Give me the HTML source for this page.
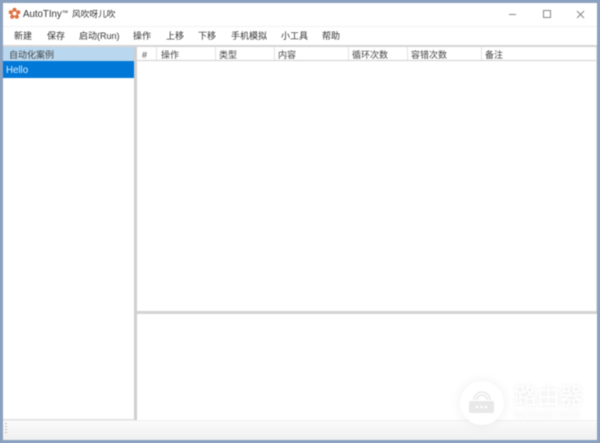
<!DOCTYPE html>
<html>
<head>
<meta charset="utf-8">
<style>
html,body{margin:0;padding:0;background:#8ba1c0;}
body{width:600px;height:443px;overflow:hidden;position:relative;font-family:"Liberation Sans","Noto Sans CJK SC",sans-serif;color:#222;}
#w{position:absolute;left:0;top:0;width:600px;height:443px;background:#8ba1c0;filter:blur(.4px);overflow:hidden;}
.a{position:absolute;white-space:nowrap;}
.t{font-size:9px;line-height:14px;color:#333;top:29px;}
.h{font-size:9px;line-height:14px;color:#444;top:47.500px;}
.v{position:absolute;top:47px;width:1px;height:13px;background:#e2e2e2;}
</style>
</head>
<body>
<div id="w">
<div class="a" style="left:3px;top:3px;width:594px;height:437px;background:#fff;"></div>
<!-- title -->
<svg class="a" style="left:8px;top:7px;" width="13" height="13" viewBox="0 0 13 13"><g fill="#dc7040"><circle cx="6.500" cy="2.700" r="2"/><circle cx="10.300" cy="5.300" r="2"/><circle cx="8.800" cy="9.800" r="2"/><circle cx="4.200" cy="9.800" r="2"/><circle cx="2.700" cy="5.300" r="2"/><circle cx="6.500" cy="6.500" r="3.400"/></g><circle cx="6.500" cy="6.500" r="2" fill="#fff"/></svg>
<div class="a" style="left:23px;top:6px;font-size:9.700px;line-height:15px;color:#333;">AutoTIny<span style="font-size:6.500px;vertical-align:2px;">™</span></div>
<div class="a" style="left:72px;top:6.500px;font-size:8.700px;line-height:15px;color:#333;">风吹呀儿吹</div>
<div class="a" style="left:509px;top:14px;width:7px;height:1px;background:#888;"></div>
<div class="a" style="left:543px;top:10px;width:6px;height:6px;border:1px solid #888;"></div>
<svg class="a" style="left:576px;top:10px;" width="9" height="9" viewBox="0 0 9 9"><path d="M1 1L8 8M8 1L1 8" stroke="#888" stroke-width="1" fill="none"/></svg>
<!-- menu -->
<div class="a" style="left:3px;top:26px;width:594px;height:1px;background:#f3f3f3;"></div>
<div class="a t" style="left:14px;">新建</div>
<div class="a t" style="left:47px;">保存</div>
<div class="a t" style="left:79px;">启动(Run)</div>
<div class="a t" style="left:133px;">操作</div>
<div class="a t" style="left:166px;">上移</div>
<div class="a t" style="left:198px;">下移</div>
<div class="a t" style="left:231px;">手机模拟</div>
<div class="a t" style="left:281px;">小工具</div>
<div class="a t" style="left:322px;">帮助</div>
<!-- left panel -->
<div class="a" style="left:3px;top:45px;width:594px;height:2px;background:#d6d6d6;"></div>
<div class="a" style="left:3px;top:47px;width:131px;height:14px;background:#b9d7ee;"></div>
<div class="a h" style="left:9px;">自动化案例</div>
<div class="a" style="left:3px;top:61px;width:131px;height:17px;background:#0078d7;"></div>
<div class="a" style="left:6px;top:62.500px;font-size:9.700px;line-height:15px;color:#dff0ff;">Hello</div>
<div class="a" style="left:134px;top:47px;width:3px;height:373px;background:#cfcfcf;"></div>
<div class="a" style="left:3px;top:419px;width:131px;height:1px;background:#ddd;"></div>
<!-- right list header -->
<div class="a" style="left:137px;top:60px;width:460px;height:1px;background:#d0d0d0;"></div>
<div class="a h" style="left:142px;">#</div>
<div class="a h" style="left:161px;">操作</div>
<div class="a h" style="left:219px;">类型</div>
<div class="a h" style="left:278px;">内容</div>
<div class="a h" style="left:352px;">循环次数</div>
<div class="a h" style="left:411px;">容错次数</div>
<div class="a h" style="left:485px;">备注</div>
<div class="v" style="left:156px;"></div>
<div class="v" style="left:215px;"></div>
<div class="v" style="left:274px;"></div>
<div class="v" style="left:348px;"></div>
<div class="v" style="left:407px;"></div>
<div class="v" style="left:481px;"></div>
<div class="a" style="left:596px;top:47px;width:1px;height:264px;background:#e4e4e4;"></div>
<!-- splitter -->
<div class="a" style="left:137px;top:311px;width:460px;height:3px;background:#d4d4d4;"></div>
<!-- status -->
<div class="a" style="left:3px;top:420px;width:594px;height:20px;background:linear-gradient(#fbfbfb,#f0f0f0);border-top:1px solid #eee;box-sizing:border-box;"></div>
<div class="a" style="left:5px;top:423px;width:2px;height:12px;background:repeating-linear-gradient(#bbb 0,#bbb 1px,transparent 1px,transparent 3px);"></div>
<!-- watermark -->
<div class="a" style="left:460px;top:381px;width:44px;height:44px;border-radius:50%;background:#fff;box-shadow:0 0 12px rgba(0,0,0,.07);"></div>
<svg class="a" style="left:466px;top:387px;" width="32" height="32" viewBox="0 0 32 32"><rect x="3" y="14" width="25" height="12" rx="2" fill="#e8e8e8"/><path d="M11 13a5 5 0 0 1 10 0M8 13a8 8 0 0 1 16 0" fill="none" stroke="#e8e8e8" stroke-width="1.500"/><g fill="#fff"><circle cx="11" cy="20" r="1.300"/><circle cx="15.500" cy="20" r="1.300"/><circle cx="20" cy="20" r="1.300"/></g></svg>
<div class="a" style="left:514px;top:382px;font-size:23px;line-height:28px;color:#fff;text-shadow:0 0 5px rgba(0,0,0,.1);">路由器</div>
<div class="a" style="left:514px;top:408px;font-size:11.500px;line-height:14px;color:#fff;letter-spacing:.5px;text-shadow:0 0 4px rgba(0,0,0,.1);">luyouqi.com</div>
</div>
</body>
</html>
